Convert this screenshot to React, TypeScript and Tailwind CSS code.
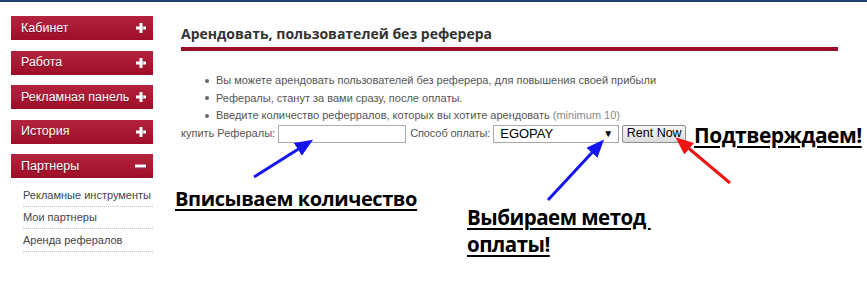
import React from 'react';

const menu = ['Кабинет', 'Работа', 'Рекламная панель', 'История'];
const subItems = ['Рекламные инструменты', 'Мои партнеры', 'Аренда рефералов'];

const Plus = () => (
  <svg width="10" height="10" viewBox="0 0 10 10">
    <rect x="3.5" y="0" width="3" height="10" fill="#fff" />
    <rect x="0" y="3.5" width="10" height="3" fill="#fff" />
    <rect x="6.5" y="3.5" width="1" height="3" fill="#3b6a8c" opacity="0.6" />
  </svg>
);

const Minus = () => (
  <svg width="11" height="10" viewBox="0 0 11 10">
    <rect x="0" y="3.5" width="11" height="3" fill="#fff" />
    <rect x="0" y="6.5" width="11" height="1" fill="#3b6a8c" opacity="0.5" />
  </svg>
);

const MenuButton = ({ label, open }: { label: string; open?: boolean }) => (
  <div className="h-[24px] w-[142px] flex items-center justify-between pl-[10px] pr-[7px] bg-gradient-to-b from-[#b4233d] to-[#9e0d28] text-white text-[12.5px] leading-none [text-shadow:0_1px_0_rgba(60,0,10,0.5)]">
    <span>{label}</span>
    {open ? <Minus /> : <Plus />}
  </div>
);

const App = () => {
  return (
    <div className="relative w-[867px] h-[283px] bg-white overflow-hidden font-['Liberation_Sans',Arial,sans-serif]">
      {/* Top bar */}
      <div className="h-[2px] bg-[#1d3f6e]" />

      <div className="flex">
        {/* Sidebar */}
        <aside className="pl-[11px] pt-[14px] w-[170px] shrink-0">
          <div className="flex flex-col gap-[10.5px]">
            {menu.map((m) => (
              <MenuButton key={m} label={m} />
            ))}
            <MenuButton label="Партнеры" open />
          </div>
          <ul className="mt-[6px] w-[142px] pl-[12px]">
            {subItems.map((s) => (
              <li
                key={s}
                className="h-[22.5px] flex items-center text-[11px] text-[#444] border-b border-dotted border-[#b9c3cc]"
              >
                {s}
              </li>
            ))}
          </ul>
        </aside>

        {/* Content */}
        <main className="pt-[21px] pl-[11px] w-[668px]">
          <h1 className="font-['Open_Sans',sans-serif] font-bold text-[14px] leading-[22px] text-[#333]">
            Арендовать, пользователей без реферера
          </h1>
          <div className="mt-[2px] h-[4px] w-[657px] bg-[#9b0f2b]" />

          <ul className="mt-[21px] pl-[24px] text-[11px] leading-[17.5px] text-[#555]">
            <li className="flex items-center gap-[7px]">
              <span className="w-[4px] h-[4px] rounded-full bg-[#666]" />
              Вы можете арендовать пользователей без реферера, для повышения своей прибыли
            </li>
            <li className="flex items-center gap-[7px]">
              <span className="w-[4px] h-[4px] rounded-full bg-[#666]" />
              Рефералы, станут за вами сразу, после оплаты.
            </li>
            <li className="flex items-center gap-[7px]">
              <span className="w-[4px] h-[4px] rounded-full bg-[#666]" />
              <span>
                Введите количество реферралов, которых вы хотите арендовать{' '}
                <span className="text-[#888]">(minimum 10)</span>
              </span>
            </li>
          </ul>

          <div className="flex items-center h-[18px] text-[11px] text-[#555]">
            <span>купить Рефералы:</span>
            <input className="ml-[3px] w-[128px] h-[18px] border border-[#aaa] bg-white outline-none" />
            <span className="ml-[4px] tracking-[-0.1px]">Способ оплаты:</span>
            <div className="ml-[3px] w-[126px] h-[18px] border border-[#aaa] bg-white flex items-center justify-between pl-[6px] pr-[5px] text-[13px] text-black">
              <span>EGOPAY</span>
              <span className="text-[10px]">▼</span>
            </div>
            <button className="ml-[3px] w-[64px] h-[18px] border border-[#8f8f8f] rounded-[2px] bg-gradient-to-b from-[#f6f6f6] to-[#dcdcdc] text-[12.5px] text-black leading-none">
              Rent Now
            </button>
          </div>
        </main>
      </div>

      {/* Annotations */}
      <div className="absolute left-[694px] top-[121px] font-['Open_Sans',sans-serif] font-bold text-[21px] leading-[28px] text-black underline underline-offset-[3px] decoration-[2px] tracking-[-0.5px]">
        Подтверждаем!
      </div>
      <div className="absolute left-[175px] top-[185px] font-['Open_Sans',sans-serif] font-bold text-[20px] leading-[28px] text-black underline underline-offset-[3px] decoration-[2px] tracking-[-0.4px]">
        Вписываем количество
      </div>
      <div className="absolute left-[467px] top-[204px] font-['Open_Sans',sans-serif] font-bold text-[20.5px] leading-[27px] text-black underline underline-offset-[3px] decoration-[2px] tracking-[-0.5px]">
        Выбираем метод&nbsp;
        <br />
        оплаты!
      </div>

      {/* Arrows */}
      <svg className="absolute left-0 top-0 pointer-events-none" width="867" height="283">
        <defs>
          <marker id="hb" markerWidth="6" markerHeight="5" refX="4" refY="2.5" orient="auto" markerUnits="strokeWidth">
            <path d="M0,0 L6,2.5 L0,5 Z" fill="#1414f0" />
          </marker>
          <marker id="hr" markerWidth="6" markerHeight="5" refX="4" refY="2.5" orient="auto" markerUnits="strokeWidth">
            <path d="M0,0 L6,2.5 L0,5 Z" fill="#f01414" />
          </marker>
        </defs>
        <line x1="254" y1="177" x2="308" y2="143" stroke="#1414f0" strokeWidth="3" markerEnd="url(#hb)" />
        <line x1="548" y1="200" x2="600" y2="144" stroke="#1414f0" strokeWidth="3" markerEnd="url(#hb)" />
        <line x1="730" y1="183" x2="680" y2="141" stroke="#f01414" strokeWidth="3" markerEnd="url(#hr)" />
      </svg>
    </div>
  );
};

export default App;
